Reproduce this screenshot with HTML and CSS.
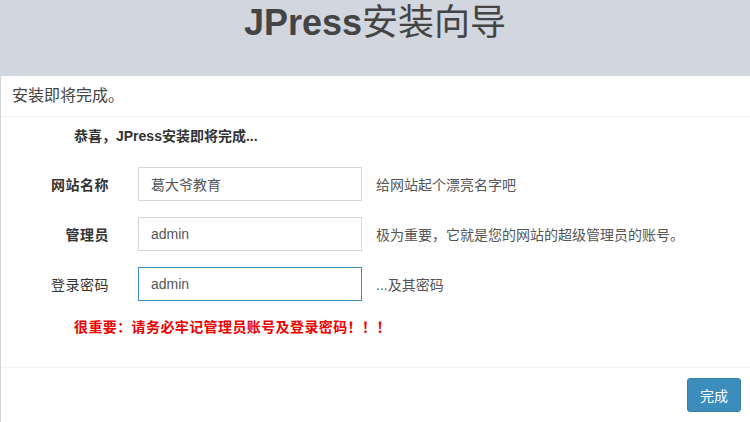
FILE: index.html
```html
<!DOCTYPE html>
<html lang="zh-CN">
<head>
    <meta charset="UTF-8">
    <title>JPress安装向导</title>
    <link rel="stylesheet" href="styles.css">
</head>
<body>
    <div class="top">
        <h1>JPress<span class="cn">安装向导</span></h1>
    </div>

    <div class="box">
        <div class="box-header">安装即将完成。</div>
        <div class="box-body">
            <p class="lead">恭喜，JPress安装即将完成...</p>

            <div class="form-row">
                <label class="label">网站名称</label>
                <input class="input" type="text" value="葛大爷教育">
                <span class="help">给网站起个漂亮名字吧</span>
            </div>
            <div class="form-row">
                <label class="label">管理员</label>
                <input class="input" type="text" value="admin">
                <span class="help">极为重要，它就是您的网站的超级管理员的账号。</span>
            </div>
            <div class="form-row">
                <label class="label label-light">登录密码</label>
                <input class="input input-focus" type="text" value="admin">
                <span class="help">...及其密码</span>
            </div>

            <p class="warn">很重要：请务必牢记管理员账号及登录密码！！！</p>
        </div>
        <div class="box-footer">
            <button class="btn">完成</button>
        </div>
    </div>
</body>
</html>
```

FILE: styles.css
```css
body {
    margin: 0;
    background-color: #fff;
    font-family: "Liberation Sans", "Noto Sans CJK SC", sans-serif;
    font-size: 14px;
    color: #333;
}
.top {
    background-color: #d2d6de;
    height: 76px;
    text-align: center;
}
.top h1 {
    margin: 0;
    padding-top: 1px;
    font-size: 36px;
    line-height: 44px;
    color: #444;
    font-weight: bold;
}
.top h1 .cn {
    font-weight: normal;
}
.box {
    border-left: 1px solid #d2d6de;
}
.box-header {
    height: 40px;
    line-height: 40px;
    padding-left: 11px;
    font-size: 16px;
    color: #444;
    border-bottom: 1px solid #f4f4f4;
}
.box-body {
    padding: 9px 0 30px 73px;
}
.lead {
    margin: 0 0 21px 0;
    line-height: 20px;
    font-weight: bold;
    color: #333;
}
.form-row {
    display: flex;
    align-items: center;
    height: 34px;
    margin-bottom: 16px;
    margin-left: -73px;
}
.label {
    width: 108px;
    text-align: right;
    font-weight: bold;
    color: #333;
    margin-right: 29px;
    letter-spacing: 0.5px;
}
.label-light {
    font-weight: normal;
}
.input {
    box-sizing: border-box;
    width: 224px;
    height: 34px;
    padding: 6px 12px;
    border: 1px solid #d2d6de;
    font-family: "Liberation Sans", "Noto Sans CJK SC", sans-serif;
    font-size: 14px;
    color: #555;
    outline: none;
    margin-right: 14px;
}
.input-focus {
    border-color: #3c8dbc;
}
.help {
    color: #555;
}
.warn {
    margin: 0;
    line-height: 20px;
    color: #e00;
    font-weight: bold;
    letter-spacing: 0.4px;
}
.box-footer {
    border-top: 1px solid #f4f4f4;
    padding: 10px 9px;
    text-align: right;
}
.btn {
    background-color: #3c8dbc;
    border: 1px solid #367fa9;
    border-radius: 3px;
    color: #fff;
    font-family: "Liberation Sans", "Noto Sans CJK SC", sans-serif;
    font-size: 14px;
    height: 34px;
    padding: 0 12px;
}
```
